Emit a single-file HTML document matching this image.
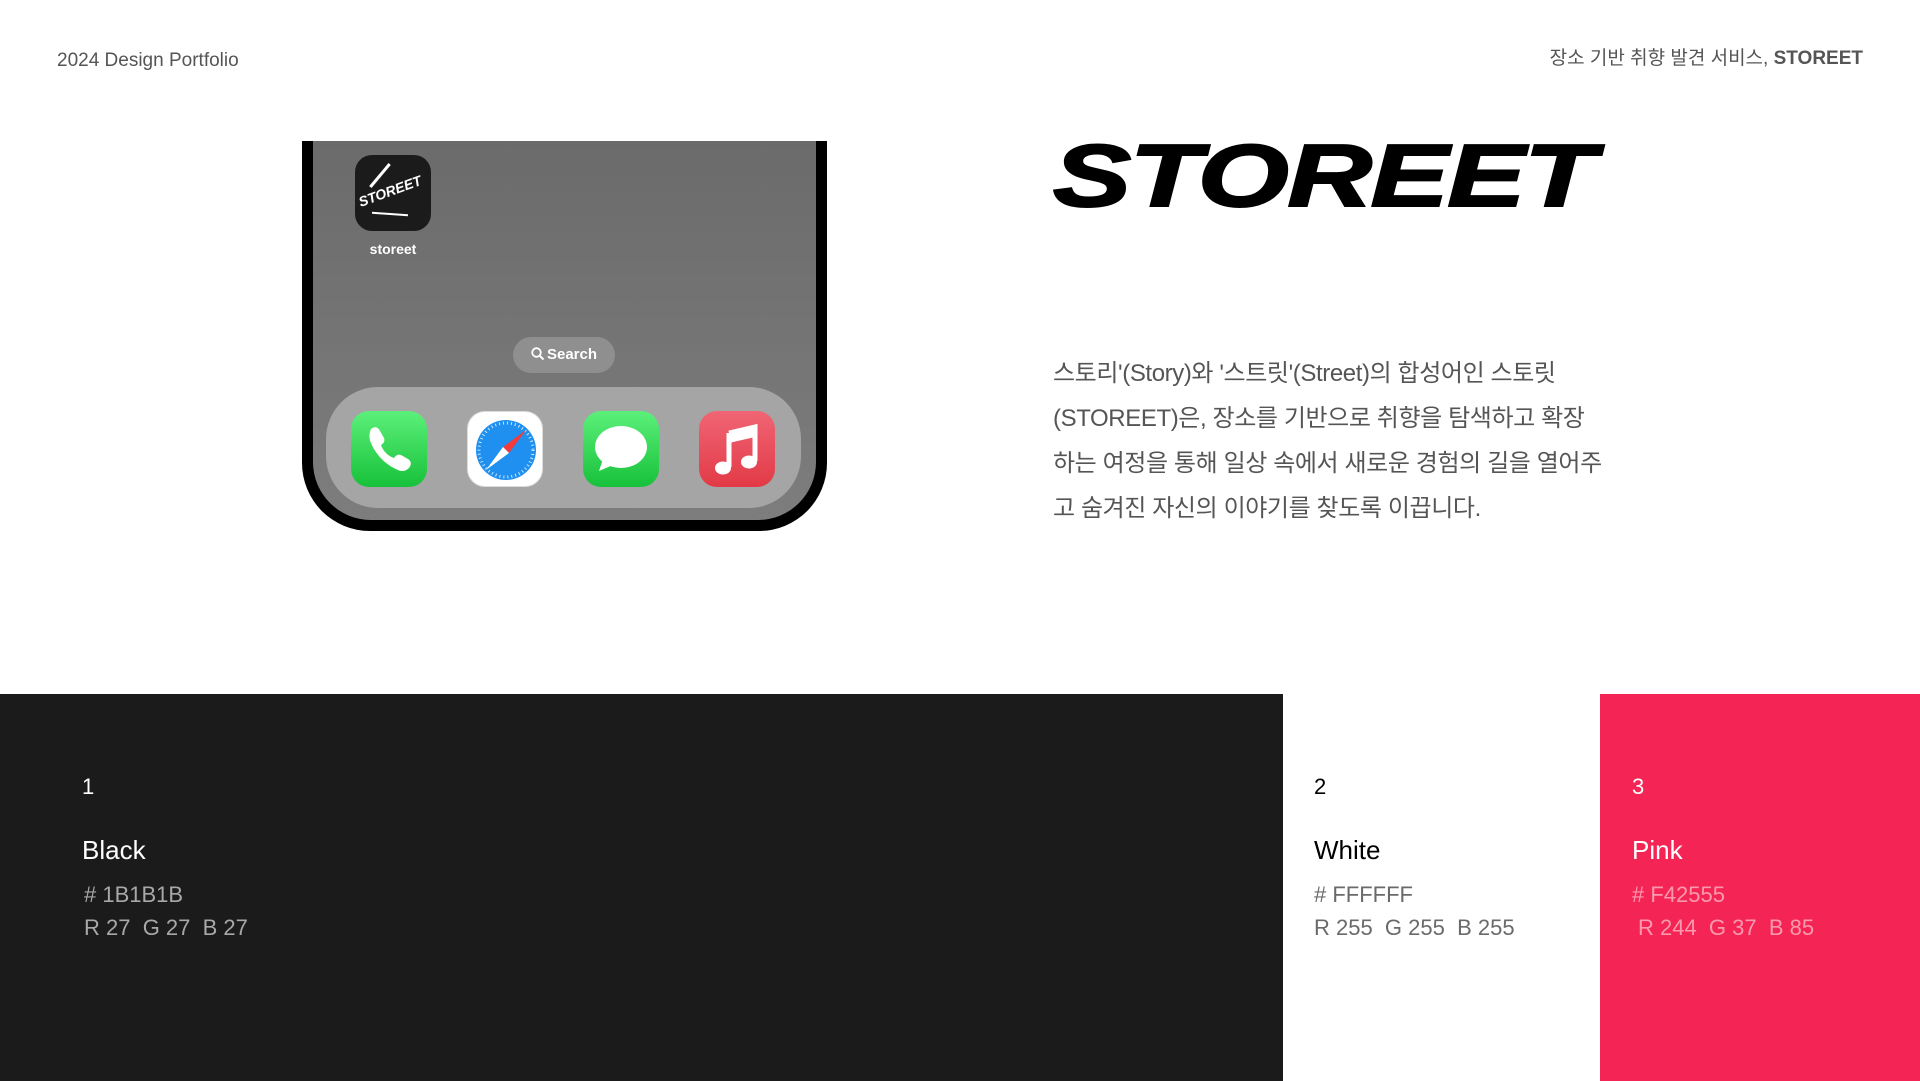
<!DOCTYPE html>
<html><head><meta charset="utf-8"><style>
*{margin:0;padding:0;box-sizing:border-box}
body{width:1920px;height:1081px;background:#fff;position:relative;overflow:hidden;font-family:"Liberation Sans","Noto Sans CJK KR",sans-serif}
.a{position:absolute;white-space:nowrap}
.hd{font-size:19px;color:#555;line-height:1}
.phone{position:absolute;left:302px;top:141px;width:525px;height:390px;background:#000;border-radius:0 0 68px 68px}
.scr{position:absolute;left:11px;top:0;right:11px;bottom:11px;border-radius:0 0 58px 58px;background:linear-gradient(#6b6b6b,#7d7d7d)}
.dock{position:absolute;left:13px;top:246px;width:475px;height:121px;border-radius:52px;background:#a5a5a5}
.ic{position:absolute;top:24px;width:76px;height:76px;border-radius:18px;overflow:hidden}
.panel{position:absolute;top:694px;height:387px}
.n{font-size:22px;line-height:1}
.nm{font-size:26px;line-height:1}
.hx{font-size:22px;line-height:1}
</style></head><body>
<div class="a hd" style="left:57px;top:51px;font-size:19px">2024 Design Portfolio</div>
<div class="a hd" style="right:57px;top:49px">장소 기반 취향 발견 서비스, <b style="color:#555">STOREET</b></div>

<div class="phone"><div class="scr">
  <div style="position:absolute;left:42px;top:14px;width:76px;height:76px;border-radius:17px;background:#1b1b1b;overflow:hidden">
    <div style="position:absolute;left:10px;top:19px;width:30px;height:3px;background:#fff;transform:rotate(-50deg)"></div>
    <div class="a" style="left:2px;top:28px;font-size:14px;font-weight:bold;font-style:italic;color:#fff;transform:rotate(-20deg)">STOREET</div>
    <div style="position:absolute;left:17px;top:58px;width:36px;height:2px;background:#fff;transform:rotate(4deg)"></div>
  </div>
  <div class="a" style="left:42px;width:76px;text-align:center;top:100px;font-size:14px;color:#fff;font-weight:bold">storeet</div>
  <div style="position:absolute;left:200px;top:196px;width:102px;height:36px;border-radius:18px;background:#8f8f8f;color:#fff;font-size:15px;font-weight:bold;line-height:36px;text-align:center">
    <svg width="14" height="14" viewBox="0 0 14 14" style="vertical-align:-2px;margin-right:2px"><circle cx="5.5" cy="5.5" r="4.3" fill="none" stroke="#fff" stroke-width="1.8"/><path d="M8.7 8.7L12.5 12.5" stroke="#fff" stroke-width="2"/></svg>Search</div>
  <div class="dock">
    <div class="ic" style="left:25px;background:linear-gradient(#5cf07a,#17c13a)">
      <svg width="76" height="76" viewBox="0 0 76 76"><path d="M20 18c4-3 7-2 9 2l4 7c1 3 0 5-3 7c2 6 7 11 13 13c2-3 4-4 7-3l7 4c3 2 4 5 1 9c-3 3-7 4-11 2c-12-5-22-15-27-27c-2-4-2-10 0-14z" fill="#fff"/></svg></div>
    <div class="ic" style="left:141px;background:#fff;border:1px solid #ddd">
      <svg width="76" height="76" viewBox="0 0 76 76"><circle cx="38" cy="38" r="30" fill="#1f8ff0"/><circle cx="38" cy="38" r="27" fill="none" stroke="#cfe6ff" stroke-width="3" stroke-dasharray="1 3"/><path d="M58 18L41 41L35 35z" fill="#f23b3b"/><path d="M18 58L35 35L41 41z" fill="#fff"/></svg></div>
    <div class="ic" style="left:257px;background:linear-gradient(#5cf07a,#17c13a)">
      <svg width="76" height="76" viewBox="0 0 76 76"><ellipse cx="38" cy="36" rx="26" ry="21" fill="#fff"/><path d="M20 48L16 60L30 54z" fill="#fff"/></svg></div>
    <div class="ic" style="left:373px;background:linear-gradient(#f06575,#e23a46)">
      <svg width="76" height="76" viewBox="0 0 76 76"><path d="M30 22L56 16V50" fill="none" stroke="#fff" stroke-width="5"/><path d="M30 22V56" stroke="#fff" stroke-width="5"/><path d="M30 24L56 18V26L30 32z" fill="#fff"/><ellipse cx="24" cy="57" rx="8" ry="6.5" fill="#fff"/><ellipse cx="50" cy="51" rx="8" ry="6.5" fill="#fff"/></svg></div>
  </div>
</div></div>

<div class="a" style="left:1053px;top:123px;font-size:88px;font-weight:bold;font-style:italic;color:#000;line-height:1.2;transform:scaleX(1.33);transform-origin:left top;letter-spacing:-1px;-webkit-text-stroke:2px #000">STOREET</div>

<div class="a" style="left:1053px;top:351px;font-size:24px;color:#555;line-height:45px;letter-spacing:-0.4px">스토리'(Story)와 '스트릿'(Street)의 합성어인 스토릿<br>(STOREET)은, 장소를 기반으로 취향을 탐색하고 확장<br>하는 여정을 통해 일상 속에서 새로운 경험의 길을 열어주<br>고 숨겨진 자신의 이야기를 찾도록 이끕니다.</div>

<div class="panel" style="left:0;width:1283px;background:#1b1b1b">
  <div class="a n" style="left:82px;top:82px;color:#fff">1</div>
  <div class="a nm" style="left:82px;top:143px;color:#fff">Black</div>
  <div class="a hx" style="left:84px;top:190px;color:#a8a8a8">#&nbsp;1B1B1B</div>
  <div class="a hx" style="left:84px;top:223px;color:#a8a8a8">R 27&nbsp; G 27&nbsp; B 27</div>
</div>
<div class="panel" style="left:1283px;width:317px;background:#fff">
  <div class="a n" style="left:31px;top:82px;color:#000">2</div>
  <div class="a nm" style="left:31px;top:143px;color:#000">White</div>
  <div class="a hx" style="left:31px;top:190px;color:#6a6a6a">#&nbsp;FFFFFF</div>
  <div class="a hx" style="left:31px;top:223px;color:#6a6a6a">R 255&nbsp; G 255&nbsp; B 255</div>
</div>
<div class="panel" style="left:1600px;width:320px;background:#f42555">
  <div class="a n" style="left:32px;top:82px;color:#fff">3</div>
  <div class="a nm" style="left:32px;top:143px;color:#fff">Pink</div>
  <div class="a hx" style="left:32px;top:190px;color:#fa98ae">#&nbsp;F42555</div>
  <div class="a hx" style="left:38px;top:223px;color:#fa98ae">R 244&nbsp; G 37&nbsp; B 85</div>
</div>
</body></html>
